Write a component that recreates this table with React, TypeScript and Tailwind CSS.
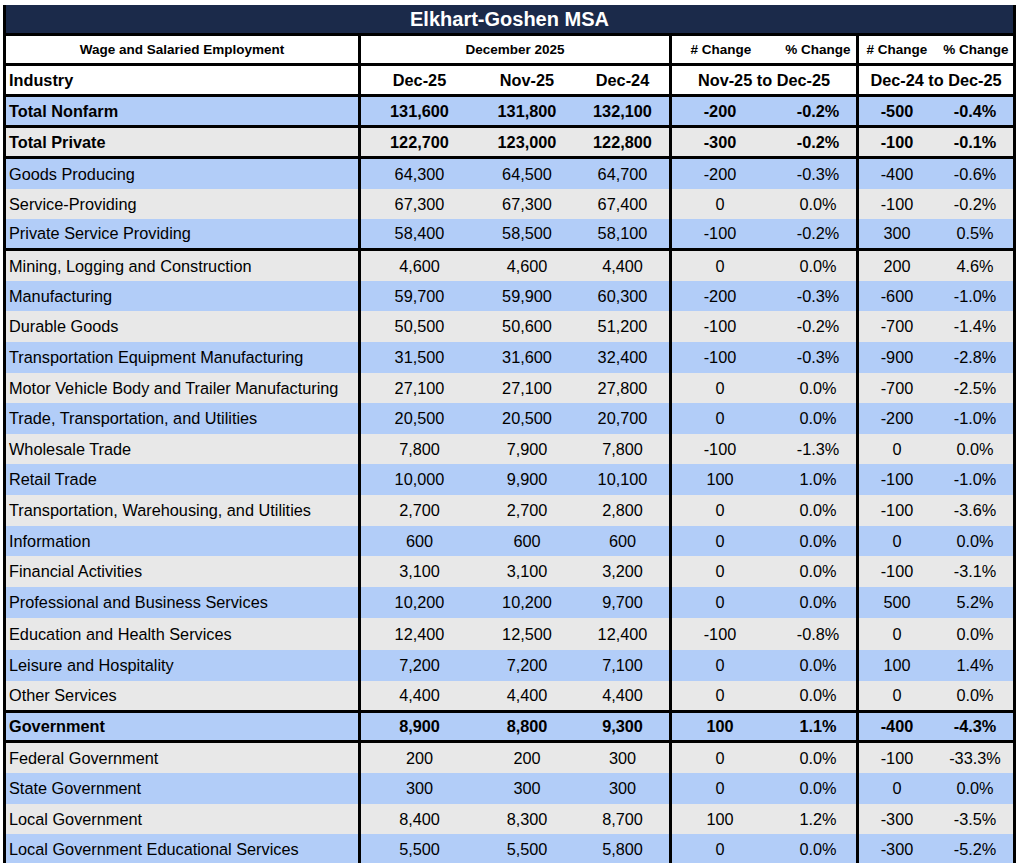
import React from "react";

type Row = {
  name: string;
  values: string[];
  h: string;
  bold?: boolean;
  divider?: boolean;
};

const ROWS: Row[] = [
  { name: "Total Nonfarm", values: ["131,600", "131,800", "132,100", "-200", "-0.2%", "-500", "-0.4%"], h: "h-[31px]", bold: true, divider: true },
  { name: "Total Private", values: ["122,700", "123,000", "122,800", "-300", "-0.2%", "-100", "-0.1%"], h: "h-[31px]", bold: true, divider: true },
  { name: "Goods Producing", values: ["64,300", "64,500", "64,700", "-200", "-0.3%", "-400", "-0.6%"], h: "h-[30px]" },
  { name: "Service-Providing", values: ["67,300", "67,300", "67,400", "0", "0.0%", "-100", "-0.2%"], h: "h-[30px]" },
  { name: "Private Service Providing", values: ["58,400", "58,500", "58,100", "-100", "-0.2%", "300", "0.5%"], h: "h-[32px]", divider: true },
  { name: "Mining, Logging and Construction", values: ["4,600", "4,600", "4,400", "0", "0.0%", "200", "4.6%"], h: "h-[30px]" },
  { name: "Manufacturing", values: ["59,700", "59,900", "60,300", "-200", "-0.3%", "-600", "-1.0%"], h: "h-[30px]" },
  { name: "Durable Goods", values: ["50,500", "50,600", "51,200", "-100", "-0.2%", "-700", "-1.4%"], h: "h-[31px]" },
  { name: "Transportation Equipment Manufacturing", values: ["31,500", "31,600", "32,400", "-100", "-0.3%", "-900", "-2.8%"], h: "h-[31px]" },
  { name: "Motor Vehicle Body and Trailer Manufacturing", values: ["27,100", "27,100", "27,800", "0", "0.0%", "-700", "-2.5%"], h: "h-[30px]" },
  { name: "Trade, Transportation, and Utilities", values: ["20,500", "20,500", "20,700", "0", "0.0%", "-200", "-1.0%"], h: "h-[31px]" },
  { name: "Wholesale Trade", values: ["7,800", "7,900", "7,800", "-100", "-1.3%", "0", "0.0%"], h: "h-[30px]" },
  { name: "Retail Trade", values: ["10,000", "9,900", "10,100", "100", "1.0%", "-100", "-1.0%"], h: "h-[31px]" },
  { name: "Transportation, Warehousing, and Utilities", values: ["2,700", "2,700", "2,800", "0", "0.0%", "-100", "-3.6%"], h: "h-[31px]" },
  { name: "Information", values: ["600", "600", "600", "0", "0.0%", "0", "0.0%"], h: "h-[30px]" },
  { name: "Financial Activities", values: ["3,100", "3,100", "3,200", "0", "0.0%", "-100", "-3.1%"], h: "h-[31px]" },
  { name: "Professional and Business Services", values: ["10,200", "10,200", "9,700", "0", "0.0%", "500", "5.2%"], h: "h-[31px]" },
  { name: "Education and Health Services", values: ["12,400", "12,500", "12,400", "-100", "-0.8%", "0", "0.0%"], h: "h-[32px]" },
  { name: "Leisure and Hospitality", values: ["7,200", "7,200", "7,100", "0", "0.0%", "100", "1.4%"], h: "h-[31px]" },
  { name: "Other Services", values: ["4,400", "4,400", "4,400", "0", "0.0%", "0", "0.0%"], h: "h-[32px]", divider: true },
  { name: "Government", values: ["8,900", "8,800", "9,300", "100", "1.1%", "-400", "-4.3%"], h: "h-[30px]", bold: true, divider: true },
  { name: "Federal Government", values: ["200", "200", "300", "0", "0.0%", "-100", "-33.3%"], h: "h-[30px]" },
  { name: "State Government", values: ["300", "300", "300", "0", "0.0%", "0", "0.0%"], h: "h-[31px]" },
  { name: "Local Government", values: ["8,400", "8,300", "8,700", "100", "1.2%", "-300", "-3.5%"], h: "h-[30px]" },
  { name: "Local Government Educational Services", values: ["5,500", "5,500", "5,800", "0", "0.0%", "-300", "-5.2%"], h: "h-[31px]" },
];

const GRID = "grid grid-cols-[355px_117px_98px_96px_96px_91px_76px_78px]";

// cell classes per value column (index into values)
const VALUE_CELL = [
  "justify-center",
  "justify-center",
  "justify-center border-r-[3px] border-black",
  "justify-center",
  "justify-center pl-[12px] border-r-[3px] border-black",
  "justify-center",
  "justify-center pl-[2px]",
];

export default function App() {
  return (
    <div className="min-h-screen bg-white pl-[3px] pt-[5px] font-['Liberation_Sans',Arial,sans-serif] text-black">
      <div className="w-[1013px] border-x-[3px] border-black">
        <div className="flex h-[31px] items-center justify-center border-b-[3px] border-black bg-[#1b2a4a] pb-[1px] text-[20px] font-bold text-white">
          Elkhart-Goshen MSA
        </div>

        <div className={`${GRID} h-[30px] border-b-[3px] border-black bg-white text-[13.5px] font-bold [&>div]:pt-[2px]`}>
          <div className="flex items-center justify-center border-r-[3px] border-black">Wage and Salaried Employment</div>
          <div className="col-span-3 flex items-center justify-center border-r-[3px] border-black">December 2025</div>
          <div className="flex items-center justify-center">
            <span className="pl-[2px]"># Change</span>
          </div>
          <div className="flex items-center justify-center border-r-[3px] border-black pl-[12px]">% Change</div>
          <div className="flex items-center justify-center"># Change</div>
          <div className="flex items-center justify-center pl-[4px]">% Change</div>
        </div>

        <div className={`${GRID} h-[31px] border-b-[3px] border-black bg-white text-[16.3px] font-bold [&>div]:pt-[1px]`}>
          <div className="flex items-center border-r-[3px] border-black pl-[3px]">Industry</div>
          <div className="flex items-center justify-center">Dec-25</div>
          <div className="flex items-center justify-center">Nov-25</div>
          <div className="flex items-center justify-center border-r-[3px] border-black">Dec-24</div>
          <div className="col-span-2 flex items-center justify-center border-r-[3px] border-black">Nov-25 to Dec-25</div>
          <div className="col-span-2 flex items-center justify-center">Dec-24 to Dec-25</div>
        </div>

        {ROWS.map((row, i) => {
          const bg = i % 2 === 0 ? "bg-[#b2cdf8]" : "bg-[#e8e8e8]";
          return (
            <div
              key={row.name}
              className={`${GRID} ${row.h} ${bg} text-[16.3px] ${row.bold ? "font-bold" : "font-normal"} ${row.divider ? "border-b-[3px] border-black" : ""}`}
            >
              <div className="flex items-center border-r-[3px] border-black pl-[3px] whitespace-nowrap">{row.name}</div>
              {row.values.map((v, j) => (
                <div key={j} className={`flex items-center ${VALUE_CELL[j]}`}>
                  {v}
                </div>
              ))}
            </div>
          );
        })}
      </div>
    </div>
  );
}
